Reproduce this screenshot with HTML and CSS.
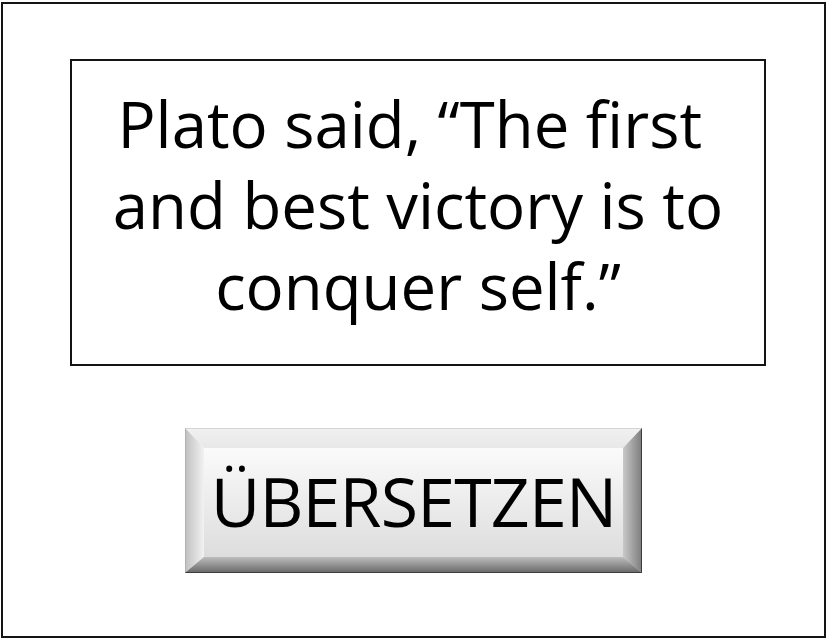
FILE: index.html
```html
<!DOCTYPE html>
<html lang="en">
<head>
<meta charset="utf-8">
<title>Plato</title>
<link rel="stylesheet" href="styles.css">
</head>
<body>
<div class="frame">
  <div class="quote-box">
    <p class="quote">Plato said, “The first&nbsp;<br>and best victory is to<br>conquer self.”</p>
  </div>
  <div class="btn-row">
    <button class="btn" type="button">
      <span class="bevel bevel-top"></span>
      <span class="bevel bevel-left"></span>
      <span class="bevel bevel-right"></span>
      <span class="bevel bevel-bottom"></span>
      <span class="btn-label">ÜBERSETZEN</span>
    </button>
  </div>
</div>
</body>
</html>
```
FILE: styles.css
```css
html, body {
  margin: 0;
  padding: 0;
  background: #ffffff;
}
body {
  font-family: "Open Sans", "Noto Sans", sans-serif;
  color: #000;
}
.frame {
  box-sizing: border-box;
  margin: 2px 0 0 1px;
  width: 825px;
  height: 636px;
  border: 2px solid #141414;
  padding: 55px 0 0 67px;
}
.quote-box {
  box-sizing: border-box;
  width: 696px;
  height: 307px;
  border: 2px solid #141414;
  padding-top: 22px;
}
.quote {
  margin: 0;
  text-align: center;
  font-size: 63.5px;
  line-height: 81px;
  color: #000;
}
.btn-row {
  display: flex;
  justify-content: center;
  margin-top: 62px;
  margin-left: -67px;
}
.btn {
  position: relative;
  box-sizing: border-box;
  width: 457px;
  height: 145px;
  padding: 0;
  margin: 0;
  border: none;
  border-right: 1px solid #3c3c3c;
  border-bottom: 1px solid #3c3c3c;
  border-top: 1px solid #d4d4d4;
  border-left: 1px solid #b0b0b0;
  background: linear-gradient(to bottom, #ffffff 0%, #f4f4f4 30%, #d9d9d9 100%);
  font-family: "Open Sans", "Noto Sans", sans-serif;
  cursor: pointer;
  display: flex;
  align-items: center;
  justify-content: center;
}
.bevel {
  position: absolute;
  inset: 0;
}
.bevel-top {
  clip-path: polygon(0 0, 100% 0, calc(100% - 18px) 19px, 18px 19px);
  background: linear-gradient(to bottom, #f0f0f0 0, #e8e8e8 19px, #e8e8e8 100%);
}
.bevel-left {
  clip-path: polygon(0 0, 18px 19px, 18px calc(100% - 15px), 0 100%);
  background: linear-gradient(to right, #c2c2c2 0, #f2f2f2 18px, #f2f2f2 100%);
}
.bevel-right {
  clip-path: polygon(100% 0, 100% 100%, calc(100% - 18px) calc(100% - 15px), calc(100% - 18px) 19px);
  background: linear-gradient(to left, #808080 0, #c9c9c9 18px, #c9c9c9 100%);
}
.bevel-bottom {
  clip-path: polygon(0 100%, 18px calc(100% - 15px), calc(100% - 18px) calc(100% - 15px), 100% 100%);
  background: linear-gradient(to top, #6c6c6c 0, #bdbdbd 15px, #bdbdbd 100%);
}
.btn-label {
  position: relative;
  font-size: 68px;
  letter-spacing: -0.8px;
  line-height: 143px;
  color: #000;
  margin-top: -1px;
}
```
